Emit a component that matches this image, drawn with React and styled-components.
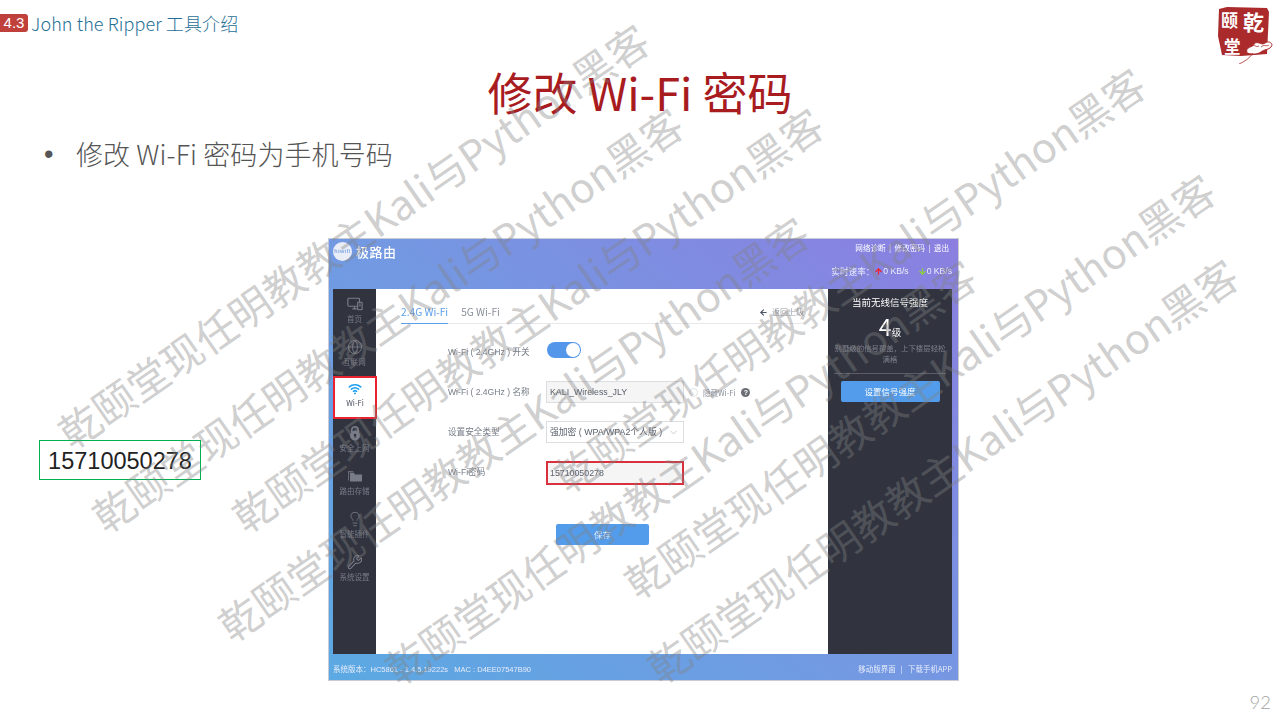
import React from "react";
import styled, { createGlobalStyle } from "styled-components";
import { ArrowDown, ArrowLeft, ArrowUp, ChevronDown, Globe, Lightbulb, Wrench } from "lucide-react";

const CJK = `"Noto Sans CJK SC", "Noto Sans", sans-serif`;

const GlobalStyle = createGlobalStyle`
	html, body {
		margin: 0;
		padding: 0;
		background: #fff;
		font-family: ${CJK};
	}
`;

const Slide = styled.div`
	position: relative;
	width: 1280px;
	height: 720px;
	overflow: hidden;
	background: #fff;
`;

const Header = styled.div`
	display: flex;
	justify-content: space-between;
	height: 62px;
	padding: 6px 5px 0 0;
	box-sizing: border-box;
`;

const Crumb = styled.div`
	display: flex;
	align-items: center;
	gap: 3px;
	height: 33px;
`;

const Badge = styled.span`
	width: 28px;
	height: 18px;
	border-radius: 0 3px 3px 0;
	background: #c0413b;
	color: #fff;
	font: 15px/18px "Liberation Sans", sans-serif;
	text-align: center;
`;

const CrumbText = styled.span`
	color: #1f6f96;
	font-size: 18px;
	font-weight: 300;
	letter-spacing: 0.1px;
`;

const Title = styled.h1`
	margin: 0;
	height: 60px;
	color: #a81b1f;
	font-size: 45px;
	font-weight: 400;
	line-height: 60px;
	text-align: center;
`;

const Bullet = styled.div`
	display: flex;
	height: 40px;
	margin-top: 12px;
	padding-left: 44px;
	color: #555;
	font-size: 27px;
	font-weight: 300;
	line-height: 40px;
	letter-spacing: 0.1px;
`;

const BulletDot = styled.span`
	width: 32px;
	font: 27px/40px "Liberation Sans", sans-serif;
`;

const Body = styled.div`
	display: flex;
	margin-top: 64px;
`;

const CalloutCol = styled.div`
	width: 328px;
	padding: 202px 0 0 39px;
	box-sizing: border-box;
`;

const Callout = styled.div`
	width: 162px;
	height: 40px;
	box-sizing: border-box;
	border: 1px solid #00b050;
	color: #222;
	font: 23.5px/40px "Liberation Sans", sans-serif;
	text-align: center;
`;

const Router = styled.div`
	display: flex;
	flex-direction: column;
	width: 631px;
	height: 443px;
	box-sizing: border-box;
	border: 1px solid #c9cbd6;
	background: linear-gradient(40deg, #5ba9e3 0%, #7498e2 50%, #8b7fe0 100%);
	color: #fff;
	filter: blur(0.45px);
`;

const TopBar = styled.div`
	display: flex;
	justify-content: space-between;
	height: 50px;
	padding: 0 6px 0 4px;
`;

const Brand = styled.div`
	display: flex;
	align-items: center;
	gap: 4px;
	height: 24px;
	font-size: 13px;
	font-weight: 500;
	letter-spacing: 0.5px;
`;

const BrandMark = styled.span`
	width: 19px;
	height: 19px;
	border-radius: 50%;
	background: #e9edf7;
	color: #5d8edc;
	font: 6px/19px "Liberation Sans", sans-serif;
	text-align: center;
`;

const TopRight = styled.div`
	display: flex;
	flex-direction: column;
	align-items: flex-end;
	gap: 11px;
	padding-top: 3px;
	font-size: 7.6px;
	line-height: 12px;
`;

const TopLinks = styled.div`
	margin-right: 3px;
	white-space: pre;
`;

const Speed = styled.div`
	display: flex;
	align-items: center;
	font-size: 8.6px;
	color: #eef0fb;
`;

const SpeedArrow = styled.span`
	display: flex;
	margin-left: ${(p) => p.$gap}px;
	margin-right: 0;
`;

const Panels = styled.div`
	display: flex;
	height: 365px;
	padding: 0 6px 0 4px;
`;

const Side = styled.div`
	display: flex;
	flex-direction: column;
	width: 43px;
	padding-top: 1px;
	background: #31343f;
`;

const SideItem = styled.div`
	position: relative;
	display: flex;
	flex-direction: column;
	align-items: center;
	gap: 2px;
	width: ${(p) => (p.$active ? "44px" : "43px")};
	height: 43px;
	padding-top: 6px;
	box-sizing: border-box;
	border: ${(p) => (p.$active ? "2px solid #e8232f" : "none")};
	background: ${(p) => (p.$active ? "#fff" : "transparent")};
	color: ${(p) => (p.$active ? "#4a4f5c" : "#787c88")};
	font-size: 7.5px;
	line-height: 9px;
	${(p) => p.$active && "padding-top: 4px;"}
`;

const Main = styled.div`
	flex: 1;
	padding: 0 24px 0 25px;
	background: #fff;
	color: #777c88;
`;

const Tabs = styled.div`
	display: flex;
	align-items: flex-end;
	height: 34px;
	border-bottom: 1px solid #e8e8ec;
`;

const Tab = styled.div`
	margin-right: 13px;
	margin-bottom: -1px;
	padding-bottom: 4px;
	border-bottom: 1px solid ${(p) => (p.$active ? "#5a9fe8" : "transparent")};
	color: ${(p) => (p.$active ? "#5a9fe8" : "#8b8f9a")};
	font-size: 10.2px;
	line-height: 14px;
`;

const Back = styled.div`
	display: flex;
	align-items: center;
	gap: 4px;
	margin-left: auto;
	padding-bottom: 5px;
	color: #9a9da6;
	font-size: 8px;
	line-height: 12px;
`;

const Form = styled.div`
	display: grid;
	grid-template-columns: 98px 1fr;
	grid-auto-rows: 22px;
	row-gap: 18px;
	padding: 17px 0 0 47px;
`;

const Label = styled.div`
	display: flex;
	align-items: center;
	font: 8.6px/12px "Liberation Sans", "Noto Sans CJK SC", sans-serif;
	white-space: pre;
`;

const Switch = styled.div`
	position: relative;
	width: 34px;
	height: 16px;
	margin: 1px 0 0 1px;
	border-radius: 8px;
	background: #5497ea;
	&::after {
		content: "";
		position: absolute;
		top: 1px;
		right: 1px;
		width: 14px;
		height: 14px;
		border-radius: 50%;
		background: #fff;
	}
`;

const FieldRow = styled.div`
	display: flex;
	align-items: center;
	gap: 5px;
`;

const Field = styled.div`
	display: flex;
	flex: none;
	align-items: center;
	justify-content: space-between;
	width: 138px;
	height: ${(p) => (p.$mark ? "24px" : "22px")};
	padding: 0 4px 0 ${(p) => (p.$mark ? "2px" : "3px")};
	box-sizing: border-box;
	border: ${(p) => (p.$mark ? "2px solid #d8303c" : "1px solid #dcdde0")};
	background: ${(p) => (p.$plain ? "#fff" : "#f5f5f6")};
	color: #5b606c;
	font: 8.8px/12px "Liberation Sans", "Noto Sans CJK SC", sans-serif;
	white-space: nowrap;
`;

const Radio = styled.span`
	width: 7px;
	height: 7px;
	border: 1px solid #e2e2e4;
	border-radius: 50%;
`;

const Hint = styled.div`
	display: flex;
	align-items: center;
	gap: 6px;
	color: #8b8f9a;
	font-size: 7.5px;
`;

const Help = styled.span`
	width: 9px;
	height: 9px;
	border-radius: 50%;
	background: #6b6e75;
	color: #fff;
	font: bold 7px/9px "Liberation Sans", sans-serif;
	text-align: center;
`;

const Save = styled.div`
	width: 93px;
	height: 21px;
	margin: 41px 0 0 155px;
	border-radius: 2px;
	background: #539ceb;
	color: #dfeafb;
	font-size: 8.5px;
	line-height: 21px;
	text-align: center;
`;

const Signal = styled.div`
	display: flex;
	flex-direction: column;
	align-items: center;
	width: 124px;
	padding: 6px 5px 0;
	box-sizing: border-box;
	background: #31343f;
`;

const SignalTitle = styled.div`
	font-size: 9.5px;
	line-height: 14px;
`;

const Level = styled.div`
	height: 26px;
	margin-top: 4px;
	font-size: 23px;
	line-height: 26px;
	small {
		font-size: 9.5px;
	}
`;

const SignalText = styled.div`
	width: 112px;
	margin-top: 3px;
	padding-bottom: 9px;
	border-bottom: 1px solid #5b5e69;
	color: #7d808b;
	font-size: 7.4px;
	line-height: 11px;
	text-align: center;
`;

const SignalButton = styled.div`
	width: 99px;
	height: 21px;
	margin-top: 7px;
	border-radius: 2px;
	background: #539ceb;
	font-size: 8.5px;
	line-height: 21px;
	text-align: center;
`;

const Footer = styled.div`
	display: flex;
	flex: 1;
	align-items: center;
	justify-content: space-between;
	padding: 2px 6px 0 4px;
	color: #e6ecfa;
	font-size: 7.5px;
`;

const Mono = styled.span`
	font-family: "Liberation Sans", "Noto Sans CJK SC", sans-serif;
`;

const PageNo = styled.div`
	position: absolute;
	right: 9px;
	bottom: 6px;
	color: #a6a6a6;
	font: 300 18.5px/24px Lato, "Liberation Sans", sans-serif;
`;

const Watermark = styled.div`
	position: absolute;
	left: ${(p) => p.$x}px;
	top: ${(p) => p.$y}px;
	color: rgba(130, 130, 130, 0.4);
	font-size: 41.3px;
	font-weight: 400;
	line-height: 50px;
	white-space: nowrap;
	pointer-events: none;
	transform: translateY(-25px) rotate(-34.7deg);
	transform-origin: 0 50%;
`;

const marks = [
	[62, 436],
	[96, 520],
	[236, 520],
	[222, 629],
	[389, 672],
	[628, 586],
	[651, 671],
	[558, 480],
];

const SealSvg = styled.svg`
	display: block;
	width: 58px;
	height: 58px;
`;

const Seal = () => (
	<SealSvg viewBox="0 0 58 58">
		<path d="M2 3 L10 1 L50 2 L52 6 L50 48 L24 50 L5 49 L1 30 Z" fill="#ab2a2c" />
		<text x="4" y="21" fontSize="17" fill="#fff" fontFamily="Noto Sans CJK SC" fontWeight="700">颐</text>
		<text x="26" y="24" fontSize="21" fill="#fff" fontFamily="Noto Sans CJK SC" fontWeight="700">乾</text>
		<text x="7" y="47" fontSize="16.5" fill="#fff" fontFamily="Noto Sans CJK SC" fontWeight="700">堂</text>
		<path d="M30 47 C28 40 36 42 37 38 C41 34 44 40 48 37 C52 34 57 38 54 41 C52 44 47 43 44 46 C41 48 36 49 30 47 Z" fill="#fff" stroke="#ab2a2c" />
		<path d="M33 40 C36 37 39 42 42 40 M44 41 C47 38 50 41 52 39" fill="none" stroke="#ab2a2c" strokeWidth="0.8" />
		<path d="M36 47 C33 52 27 56 22 58" fill="none" stroke="#ab2a2c" strokeWidth="0.8" />
	</SealSvg>
);

const Icon = styled.svg`
	display: block;
	flex: none;
	width: ${(p) => p.$size || 16}px;
	height: ${(p) => p.$size || 16}px;
`;

const MonitorIcon = () => (
	<Icon viewBox="0 0 18 16" fill="none" stroke="#787c88" strokeWidth="1.3">
		<rect x="1" y="1.5" width="13" height="9" rx="1" />
		<path d="M6 13.5h5M8.5 10.5v3" />
		<rect x="12" y="6" width="5" height="8.5" rx="0.6" fill="#31343f" />
		<path d="M13.5 8h2M13.5 10h2" />
	</Icon>
);

const WifiIcon = () => (
	<Icon $size={14} viewBox="0 0 16 14" fill="none" stroke="#1f9ff2" strokeWidth="1.8" strokeLinecap="round">
		<path d="M1.5 4.6 C5 1.2 11 1.2 14.5 4.6" />
		<path d="M3.9 7.2 C6.2 5.2 9.8 5.2 12.1 7.2" />
		<path d="M6.2 9.6 C7.2 8.8 8.8 8.8 9.8 9.6" />
		<circle cx="8" cy="12" r="1.1" fill="#1f9ff2" stroke="none" />
	</Icon>
);

const LockIcon = () => (
	<Icon viewBox="0 0 16 16">
		<path d="M4.8 7V5a3.2 3.2 0 0 1 6.4 0v2" fill="none" stroke="#787c88" strokeWidth="1.6" />
		<circle cx="8" cy="10.5" r="5" fill="#787c88" />
		<circle cx="8" cy="10" r="1.3" fill="#31343f" />
		<rect x="7.4" y="10" width="1.2" height="3" fill="#31343f" />
	</Icon>
);

const FolderIcon = () => (
	<Icon viewBox="0 0 16 16" fill="#787c88">
		<path d="M1 3h5l1 1.5h-5v8H1z" opacity="0.75" />
		<path d="M3 5h4l1 1.5h7v7H3z" />
	</Icon>
);

const sideItems = [
	{ name: "首页", icon: <MonitorIcon /> },
	{ name: "互联网", icon: <Globe size={16} strokeWidth={1.4} /> },
	{ name: "Wi-Fi", icon: <WifiIcon />, active: true },
	{ name: "安全上网", icon: <LockIcon /> },
	{ name: "路由存储", icon: <FolderIcon /> },
	{ name: "智能插件", icon: <Lightbulb size={16} strokeWidth={1.3} /> },
	{ name: "系统设置", icon: <Wrench size={16} strokeWidth={1.6} /> },
];

const App = () => {
	return (
		<Slide>
			<GlobalStyle />
			<Header>
				<Crumb>
					<Badge>4.3</Badge>
					<CrumbText>John the Ripper 工具介绍</CrumbText>
				</Crumb>
				<Seal />
			</Header>
			<Title>修改 Wi-Fi 密码</Title>
			<Bullet>
				<BulletDot>•</BulletDot>
				<span>修改 Wi-Fi 密码为手机号码</span>
			</Bullet>
			<Body>
				<CalloutCol>
					<Callout>15710050278</Callout>
				</CalloutCol>
				<Router>
					<TopBar>
						<Brand>
							<BrandMark>hiwifi</BrandMark>
							极路由
						</Brand>
						<TopRight>
							<TopLinks>网络诊断  |  修改密码  |  退出</TopLinks>
							<Speed>
								实时速率：
								<SpeedArrow $gap={0}>
									<ArrowUp size={9} color="#f0232d" strokeWidth={3.5} />
								</SpeedArrow>
								<Mono>0 KB/s</Mono>
								<SpeedArrow $gap={9}>
									<ArrowDown size={9} color="#8bd13a" strokeWidth={3.5} />
								</SpeedArrow>
								<Mono>0 KB/s</Mono>
							</Speed>
						</TopRight>
					</TopBar>
					<Panels>
						<Side>
							{sideItems.map((item) => (
								<SideItem key={item.name} $active={item.active}>
									{item.icon}
									<span>{item.name}</span>
								</SideItem>
							))}
						</Side>
						<Main>
							<Tabs>
								<Tab $active>2.4G Wi-Fi</Tab>
								<Tab>5G Wi-Fi</Tab>
								<Back>
									<ArrowLeft size={9} color="#4d5665" strokeWidth={3} />
									返回上级
								</Back>
							</Tabs>
							<Form>
								<Label>Wi-Fi ( 2.4GHz ) 开关</Label>
								<Switch />
								<Label>Wi-Fi ( 2.4GHz ) 名称</Label>
								<FieldRow>
									<Field>KALI_Wireless_JLY</Field>
									<Radio />
									<Hint>
										隐藏Wi-Fi
										<Help>?</Help>
									</Hint>
								</FieldRow>
								<Label>设置安全类型</Label>
								<Field $plain>
									强加密 ( WPA/WPA2个人版 )
									<ChevronDown size={11} color="#c4c6cc" />
								</Field>
								<Label>Wi-Fi密码</Label>
								<Field $mark>15710050278</Field>
							</Form>
							<Save>保存</Save>
						</Main>
						<Signal>
							<SignalTitle>当前无线信号强度</SignalTitle>
							<Level>
								4<small>级</small>
							</Level>
							<SignalText>别墅级的信号覆盖，上下楼层轻松满格</SignalText>
							<SignalButton>设置信号强度</SignalButton>
						</Signal>
					</Panels>
					<Footer>
						<span>
							系统版本：<Mono>HC5861 - 1.4.5.19222s &nbsp; MAC : D4EE07547B90</Mono>
						</span>
						<span>移动版界面 &nbsp; | &nbsp; 下载手机APP</span>
					</Footer>
				</Router>
			</Body>
			<PageNo>92</PageNo>
			{marks.map(([x, y]) => (
				<Watermark key={`${x}-${y}`} $x={x} $y={y}>
					乾颐堂现任明教教主Kali与Python黑客
				</Watermark>
			))}
		</Slide>
	);
};

export default App;
